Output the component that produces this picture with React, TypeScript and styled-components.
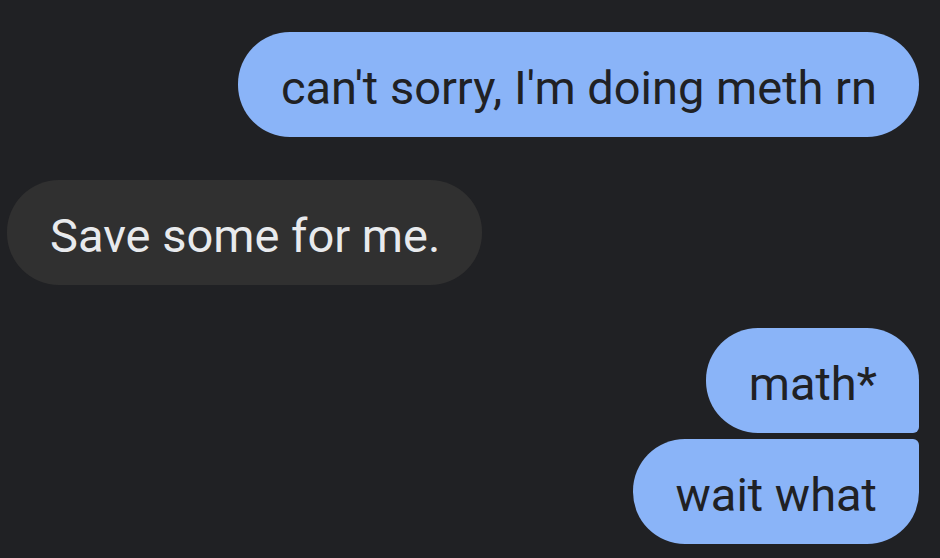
import React from "react";
import styled, { createGlobalStyle } from "styled-components";

const Global = createGlobalStyle`
  html, body { margin: 0; padding: 0; background: #202124; }
  body { font-family: Roboto, "Noto Sans", sans-serif; }
`;

const Thread = styled.div`
  width: 940px;
  height: 558px;
  box-sizing: border-box;
  padding: 32px 21px 0 7px;
  display: flex;
  flex-direction: column;
  overflow: hidden;
`;

const Group = styled.div<{ $out?: boolean }>`
  display: flex;
  flex-direction: column;
  align-items: ${(p) => (p.$out ? "flex-end" : "flex-start")};
  gap: 6px;
  margin-bottom: 43px;
`;

type Pos = "single" | "first" | "last";

const Bubble = styled.div<{ $out?: boolean; $pos?: Pos }>`
  box-sizing: border-box;
  height: 105px;
  padding: 6px 42px 0 43px;
  display: flex;
  align-items: center;
  font-size: 47px;
  line-height: 1;
  white-space: nowrap;
  background: ${(p) => (p.$out ? "#8ab4f8" : "#303030")};
  color: ${(p) => (p.$out ? "#202124" : "#e8eaed")};
  border-radius: 52px;
  ${(p) => (p.$pos === "first" ? "border-bottom-right-radius: 6px;" : "")}
  ${(p) => (p.$pos === "last" ? "border-top-right-radius: 6px;" : "")}
`;

export default function App() {
  return (
    <>
      <Global />
      <Thread>
        <Group $out>
          <Bubble $out>can't sorry, I'm doing meth rn</Bubble>
        </Group>
        <Group>
          <Bubble>Save some for me.</Bubble>
        </Group>
        <Group $out>
          <Bubble $out $pos="first">math*</Bubble>
          <Bubble $out $pos="last">wait what</Bubble>
        </Group>
      </Thread>
    </>
  );
}
